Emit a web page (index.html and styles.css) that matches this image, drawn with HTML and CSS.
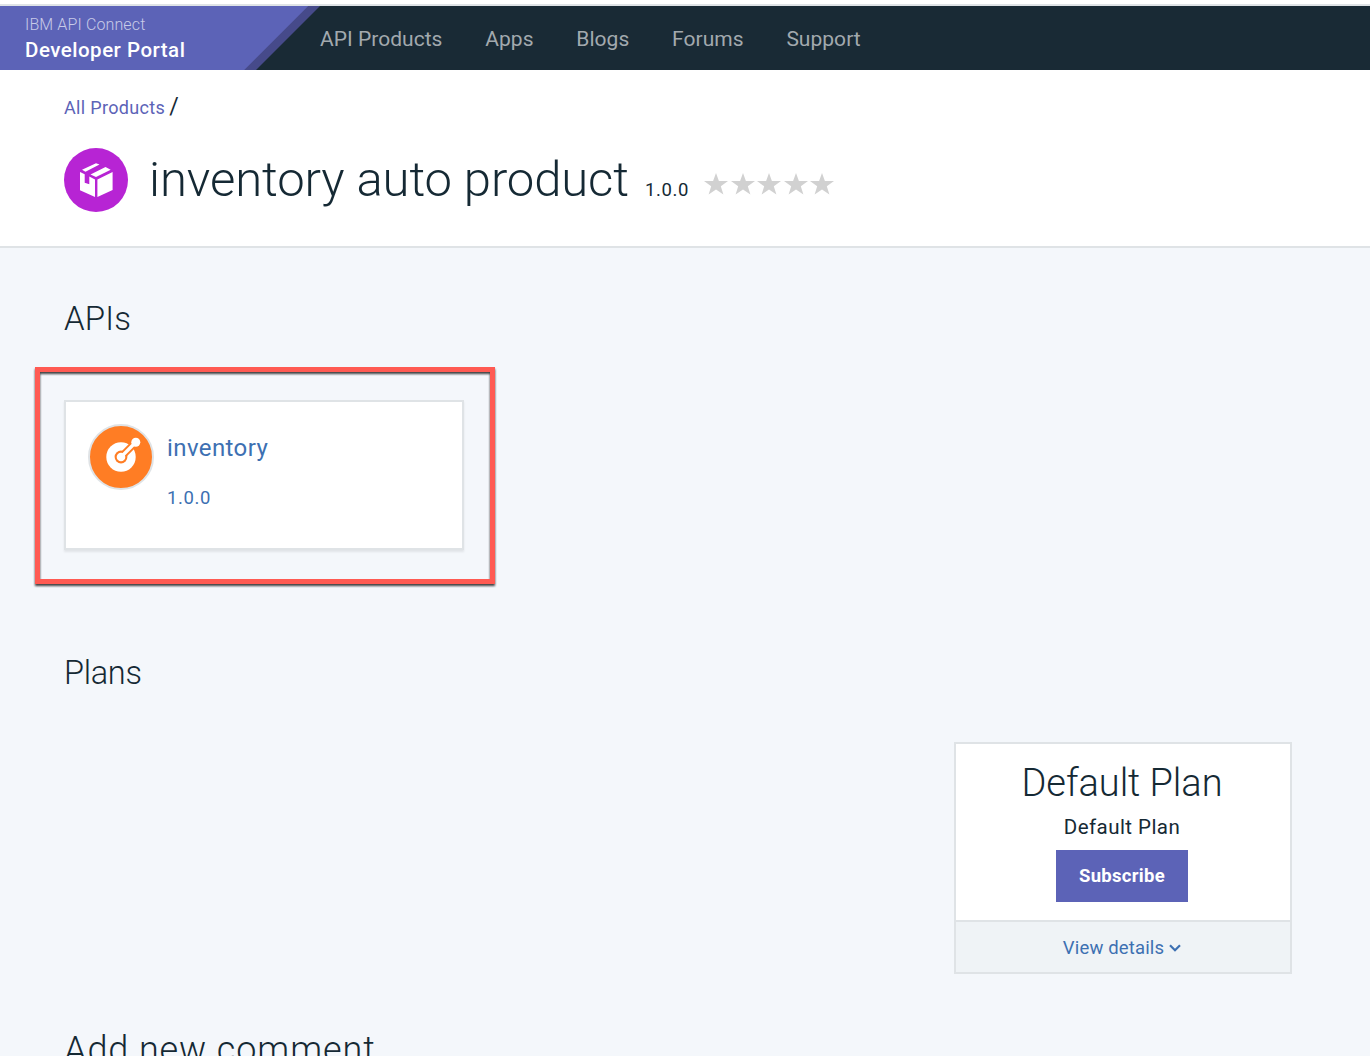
FILE: index.html
```html
<!DOCTYPE html>
<html lang="en">
<head>
<meta charset="utf-8">
<title>inventory auto product</title>
<link rel="stylesheet" href="styles.css">
</head>
<body>
<header class="topbar">
  <a class="brand">
    <span class="brand-small">IBM API Connect</span>
    <span class="brand-name">Developer Portal</span>
  </a>
  <nav class="menu">
    <a>API Products</a>
    <a>Apps</a>
    <a>Blogs</a>
    <a>Forums</a>
    <a>Support</a>
  </nav>
</header>
<section class="product">
  <div class="crumbs"><a>All Products</a><span class="slash">/</span></div>
  <div class="title-row">
    <svg class="product-icon" viewBox="0 0 64 64">
      <circle cx="32" cy="32" r="32" fill="#b724d4"/>
      <path fill="#fff" d="M18 21.8L32 15.3l3.5 1.2L21.5 23.8zM26.5 26.6L41.5 19l5.2 2.8L32 29zM16 24L20.7 26.2V34.8L25.3 36.2V28.6L31 31.4V49L16 42.3zM33.4 31.4L48.6 24V42L33.4 49z"/>
    </svg>
    <h1>inventory auto product</h1>
    <span class="version">1.0.0</span>
    <div class="stars">
      <svg viewBox="0 0 24 22"><path d="M12 0l2.9 8.1H24l-7.2 5.2 2.6 8.3L12 16.6l-7.4 5 2.6-8.3L0 8.1h9.1z"/></svg>
      <svg viewBox="0 0 24 22"><path d="M12 0l2.9 8.1H24l-7.2 5.2 2.6 8.3L12 16.6l-7.4 5 2.6-8.3L0 8.1h9.1z"/></svg>
      <svg viewBox="0 0 24 22"><path d="M12 0l2.9 8.1H24l-7.2 5.2 2.6 8.3L12 16.6l-7.4 5 2.6-8.3L0 8.1h9.1z"/></svg>
      <svg viewBox="0 0 24 22"><path d="M12 0l2.9 8.1H24l-7.2 5.2 2.6 8.3L12 16.6l-7.4 5 2.6-8.3L0 8.1h9.1z"/></svg>
      <svg viewBox="0 0 24 22"><path d="M12 0l2.9 8.1H24l-7.2 5.2 2.6 8.3L12 16.6l-7.4 5 2.6-8.3L0 8.1h9.1z"/></svg>
    </div>
  </div>
</section>
<main class="content">
  <h2>APIs</h2>
  <div class="api-card">
    <svg class="api-icon" viewBox="0 0 66 66">
      <circle cx="33" cy="33" r="32" fill="#ff7d24" stroke="#dfe3e6" stroke-width="2"/>
      <circle cx="33" cy="33" r="14.7" fill="#fff"/>
      <path d="M33 33L48 18" stroke="#ff7d24" stroke-width="7.4"/>
      <circle cx="33" cy="33" r="6.4" fill="#ff7d24"/>
      <path d="M33 33L48 18" stroke="#fff" stroke-width="3.4"/>
      <circle cx="33" cy="33" r="4.3" fill="#fff"/>
      <circle cx="47.8" cy="18.2" r="4.5" fill="#fff"/>
    </svg>
    <div class="api-text">
      <a class="api-name">inventory</a>
      <a class="api-version">1.0.0</a>
    </div>
    <div class="highlight"></div>
  </div>
  <h2 class="h-plans">Plans</h2>
  <div class="plan">
    <div class="plan-body">
      <h3>Default Plan</h3>
      <p>Default Plan</p>
      <button>Subscribe</button>
    </div>
    <div class="plan-foot">
      <a>View details</a>
      <svg class="chevron" viewBox="0 0 12 8"><path d="M1 1.2l5 5 5-5" fill="none" stroke="#3d70b2" stroke-width="2.2"/></svg>
    </div>
  </div>
  <h2 class="h-comment">Add new comment</h2>
</main>
</body>
</html>
```

FILE: styles.css
```css
* { box-sizing: border-box; }
body {
  margin: 0;
  height: 1056px;
  overflow: hidden;
  padding-top: 4px;
  background: #fff;
  color: #152934;
  font-family: Roboto, "Liberation Sans", sans-serif;
}
h1, h2, h3, p { margin: 0; font-weight: 300; white-space: nowrap; }
a, span { white-space: nowrap; }
svg { display: block; flex: none; }

.topbar {
  display: flex;
  height: 66px;
  border-top: 2px solid #dfe3e6;
  background: #192a35;
}
.brand {
  display: flex;
  flex-direction: column;
  width: 320px;
  padding: 9px 0 0 25px;
  background: linear-gradient(135deg, #5c63b7 217.6px, #464a8a 218.2px);
  clip-path: polygon(0 0, 320px 0, 256px 64px, 0 64px);
}
.brand-small { font-size: 16px; line-height: 20px; font-weight: 300; color: #c8cbe8; letter-spacing: .13px; }
.brand-name { font-size: 20.5px; line-height: 30px; font-weight: 500; color: #fff; letter-spacing: .5px; }
.menu { display: flex; gap: 42.8px; font-size: 21px; line-height: 66px; color: #a2a9ae; letter-spacing: .03px; }

.product { height: 178px; padding: 26px 64px 0; border-bottom: 2px solid #dfe3e6; }
.crumbs { display: flex; gap: 4px; height: 24px; font-size: 18px; line-height: 23px; color: #5c63b7; letter-spacing: .33px; }
.slash { font-size: 23px; line-height: 21px; color: #152934; }
.title-row { display: flex; height: 64px; margin-top: 28px; }
.product-icon { width: 64px; height: 64px; }
h1 { width: 496px; margin-left: 21px; font-size: 49px; line-height: 63px; letter-spacing: -.1px; }
.version { width: 59px; font-size: 18.5px; line-height: 84px; letter-spacing: .6px; }
.stars { display: flex; gap: 2.6px; padding-top: 24.5px; fill: #d1d1d1; }
.stars svg { width: 24px; height: 22px; }

.content { height: 808px; padding: 50px 78px 0 64px; background: #f4f7fb; }
h2 { height: 42px; font-size: 33px; line-height: 42px; letter-spacing: .2px; }
.api-card {
  position: relative;
  display: flex;
  gap: 13px;
  width: 400px;
  height: 150px;
  margin: 60px 0 102px;
  padding: 22px;
  border: 2px solid #dfe3e6;
  background: #fff;
  box-shadow: 0 2px 2px rgba(0, 0, 0, .08);
}
.api-icon { width: 66px; height: 66px; }
.api-text { display: flex; flex-direction: column; padding-top: 8px; color: #3d70b2; }
.api-name { font-size: 24px; line-height: 32px; letter-spacing: .4px; }
.api-version { margin-top: 21px; font-size: 18.5px; line-height: 26px; letter-spacing: .6px; }
.highlight {
  position: absolute;
  inset: -35px -33px -36px -31px;
  border: 5px solid #ff5a52;
  filter: drop-shadow(0 2px 1px rgba(0, 0, 0, .75));
}
.h-plans { font-size: 32.5px; line-height: 43px; letter-spacing: -.3px; }
.plan { width: 338px; height: 232px; margin: 48px 0 0 auto; border: 2px solid #dfe3e6; background: #fff; }
.plan-body { display: flex; flex-direction: column; align-items: center; height: 176px; padding: 14px 2px 0 0; }
h3 { font-size: 38px; line-height: 50px; letter-spacing: -.05px; }
p { margin-top: 4px; font-size: 20.5px; line-height: 30px; font-weight: 400; letter-spacing: .45px; }
button {
  width: 132px;
  height: 52px;
  margin-top: 8px;
  padding: 0;
  border: 0;
  background: #5c63b7;
  color: #fff;
  font: 700 18.5px/52px Roboto, sans-serif;
  letter-spacing: .3px;
}
.plan-foot {
  display: flex;
  justify-content: center;
  align-items: center;
  gap: 5px;
  height: 52px;
  padding: 1px 2px 0 0;
  border-top: 2px solid #dfe3e6;
  background: #eff3f6;
  color: #3d70b2;
  font-size: 18.5px;
  letter-spacing: .15px;
}
.chevron { width: 12px; height: 8px; }
.h-comment { margin-top: 53px; font-size: 36px; line-height: 46px; letter-spacing: .9px; }
```
